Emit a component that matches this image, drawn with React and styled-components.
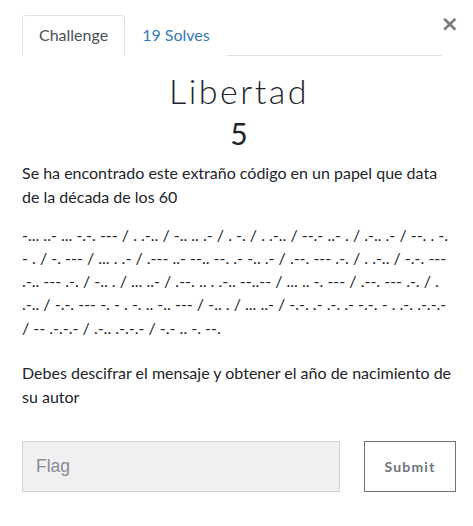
import React from "react";
import styled, { createGlobalStyle } from "styled-components";

const Global = createGlobalStyle`
  html, body { margin: 0; padding: 0; background: #fff; }
  body { font-family: Lato, "Open Sans", sans-serif; color: #212529; }
  * { box-sizing: border-box; }
`;

const Modal = styled.div`
  position: relative;
  width: 473px;
  padding: 15px 17px 0 22px;
`;

const Close = styled.button`
  position: absolute;
  top: 13px;
  right: 14px;
  border: 0;
  background: none;
  padding: 0;
  font-family: "DejaVu Sans", sans-serif;
  font-size: 22px;
  font-weight: bold;
  line-height: 1;
  color: #7a7a7a;
  cursor: pointer;
`;

const Tabs = styled.div`
  display: flex;
  width: 420px;
  border-bottom: 1px solid #dee2e6;
`;

const Tab = styled.div`
  padding: 8px 16px 9px;
  margin-bottom: -1px;
  font-size: 16px;
  line-height: 22px;
  border: 1px solid ${(p) => (p.$active ? "#dee2e6" : "transparent")};
  border-bottom-color: ${(p) => (p.$active ? "#fff" : "transparent")};
  border-radius: 4px 4px 0 0;
  color: ${(p) => (p.$active ? "#495057" : "#337ab7")};
  background: #fff;
`;

const Title = styled.h2`
  margin: 15px 0 0;
  text-align: center;
  font-weight: 300;
  font-size: 34px;
  line-height: 40px;
  letter-spacing: 2.5px;
  color: #212529;
`;

const Value = styled.h3`
  margin: 6px 0 0;
  text-align: center;
  font-weight: 400;
  font-size: 30px;
  line-height: 32px;
  color: #212529;
`;

const Desc = styled.p`
  margin: ${(p) => p.$top}px 0 0;
  font-size: 16px;
  line-height: 24px;
  width: 434px;
`;

const Morse = styled.p`
  margin: 13.6px 0 0;
  font-size: 16px;
  line-height: 23.25px;
  width: 434px;
`;

const Form = styled.div`
  display: flex;
  gap: 24px;
  margin-top: 32px;
`;

const Input = styled.input`
  width: 318px;
  height: 51px;
  border: 1px solid #ced4da;
  background: #f0f0f0;
  padding: 0 13px;
  font-family: "Liberation Sans", Arial, sans-serif;
  font-size: 17.5px;
  color: #495057;
  &::placeholder { color: #868e96; }
  outline: none;
`;

const Submit = styled.button`
  width: 92px;
  height: 51px;
  border: 1px solid #6c757d;
  background: #fff;
  font-family: Lato, sans-serif;
  font-weight: 700;
  font-size: 14px;
  letter-spacing: 1.2px;
  color: #6c757d;
`;

const morse =
  "-... ..- ... -.-. --- / . .-.. / -.. .. .- / . -. / . .-.. / --.- ..- . / .-.. .- / --. . -. - . / -. --- / ... . .- / .--- ..- --.. --. .- -.. .- / .--. --- .-. / . .-.. / -.-. --- .-.. --- .-. / -.. . / ... ..- / .--. .. . .-.. --..-- / ... .. -. --- / .--. --- .-. / . .-.. / -.-. --- -. - . -. .. -.. --- / -.. . / ... ..- / -.-. .- .-. .- -.-. - . .-. .-.-.- / -- .-.-.- / .-.. .-.-.- / -.- .. -. --.";

export default function App() {
  return (
    <>
      <Global />
      <Modal>
        <Close aria-label="Close">×</Close>
        <Tabs>
          <Tab $active>Challenge</Tab>
          <Tab>19 Solves</Tab>
        </Tabs>
        <Title>Libertad</Title>
        <Value>5</Value>
        <Desc $top={12}>Se ha encontrado este extraño código en un papel que data de la década de los 60</Desc>
        <Morse>{morse}</Morse>
        <Desc $top={22}>Debes descifrar el mensaje y obtener el año de nacimiento de su autor</Desc>
        <Form>
          <Input placeholder="Flag" />
          <Submit>Submit</Submit>
        </Form>
      </Modal>
    </>
  );
}
